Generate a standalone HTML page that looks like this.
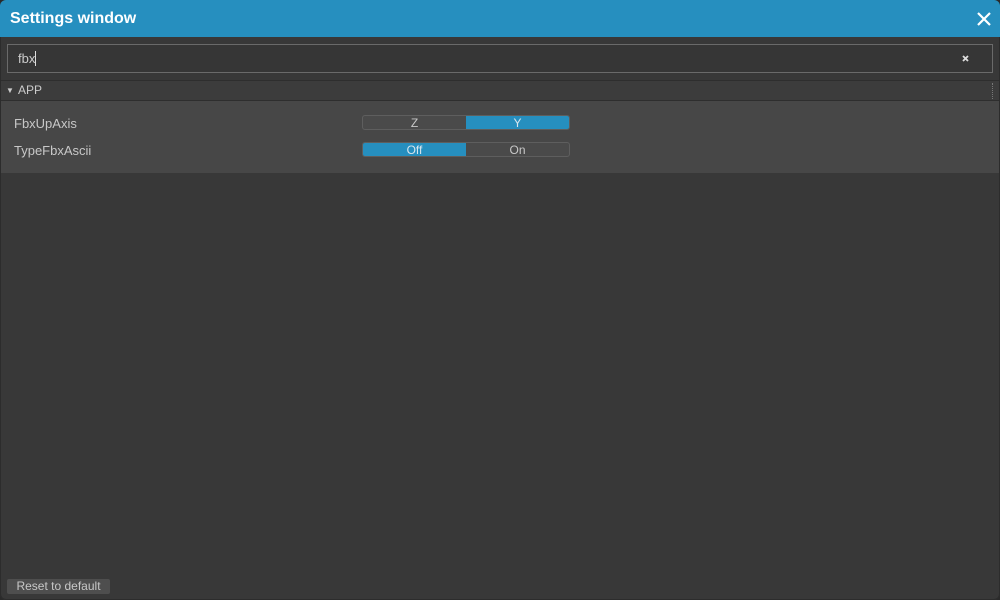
<!DOCTYPE html>
<html><head><style>
*{margin:0;padding:0;box-sizing:border-box}
body{width:1000px;height:600px;background:#2a2a2a;font-family:"Liberation Sans","DejaVu Sans",sans-serif;overflow:hidden;position:relative}
.win{position:absolute;left:0;top:0;width:1000px;height:600px;background:#383838;border-radius:6px;overflow:hidden;box-shadow:inset 0 0 0 1px #2c2c2c}
.title{position:absolute;left:0;top:0;width:1000px;height:37px;background:#268fbf;color:#fff;font-weight:bold;font-size:16px;line-height:38px;padding-left:10px}
.search{position:absolute;left:7px;top:44px;width:986px;height:29px;border:1px solid #6a6a6a;background:#363636;color:#ccc;font-size:13px;line-height:27px;padding-left:10px}
.hdr{position:absolute;left:1px;top:80px;width:998px;height:21px;background:#3c3c3c;border-top:1px solid #2e2e2e;border-bottom:1px solid #2e2e2e;color:#ccc;font-size:12px;line-height:19px;padding-left:17px}
.panel{position:absolute;left:1px;top:101px;width:998px;height:72px;background:#474747}
.lbl{position:absolute;left:14px;color:#c8c8c8;font-size:13px}
.tg{position:absolute;left:362px;width:208px;height:15px;border:1px solid #5e5e5e;border-radius:3px;background:#4a4a4a;overflow:hidden;display:flex}
.tg div{flex:1;text-align:center;color:#c8c8c8;font-size:12px;line-height:14px}
.tg .on{background:#268fbf;color:#d8e6ee}
.reset{position:absolute;left:7px;top:579px;width:103px;height:15px;background:#4e4e4e;color:#c8c8c8;font-size:12px;line-height:15px;text-align:center;border-radius:2px}
</style></head><body>
<div class="win">
<div class="title">Settings window</div>
<svg style="position:absolute;left:977px;top:12px" width="14" height="14"><path d="M1 1L13 13M13 1L1 13" stroke="#fff" stroke-width="2.2"/></svg>
<div class="search">fbx<span style="display:inline-block;width:1px;height:15px;background:#ddd;vertical-align:-3px"></span></div>
<svg style="position:absolute;left:962px;top:55px" width="7" height="7"><path d="M1 1L6 6M6 1L1 6" stroke="#ddd" stroke-width="1.8"/></svg>
<div class="hdr"><span style="position:absolute;left:5px;top:0;font-size:8px">▼</span>APP</div>
<div style="position:absolute;left:992px;top:83px;width:2px;height:16px;border-left:1px dotted #777"></div>
<div class="panel"></div>
<div class="lbl" style="top:116px">FbxUpAxis</div>
<div class="lbl" style="top:143px">TypeFbxAscii</div>
<div class="tg" style="top:115px"><div>Z</div><div class="on">Y</div></div>
<div class="tg" style="top:142px"><div class="on">Off</div><div>On</div></div>
<div class="reset">Reset to default</div>
</div>
</body></html>
